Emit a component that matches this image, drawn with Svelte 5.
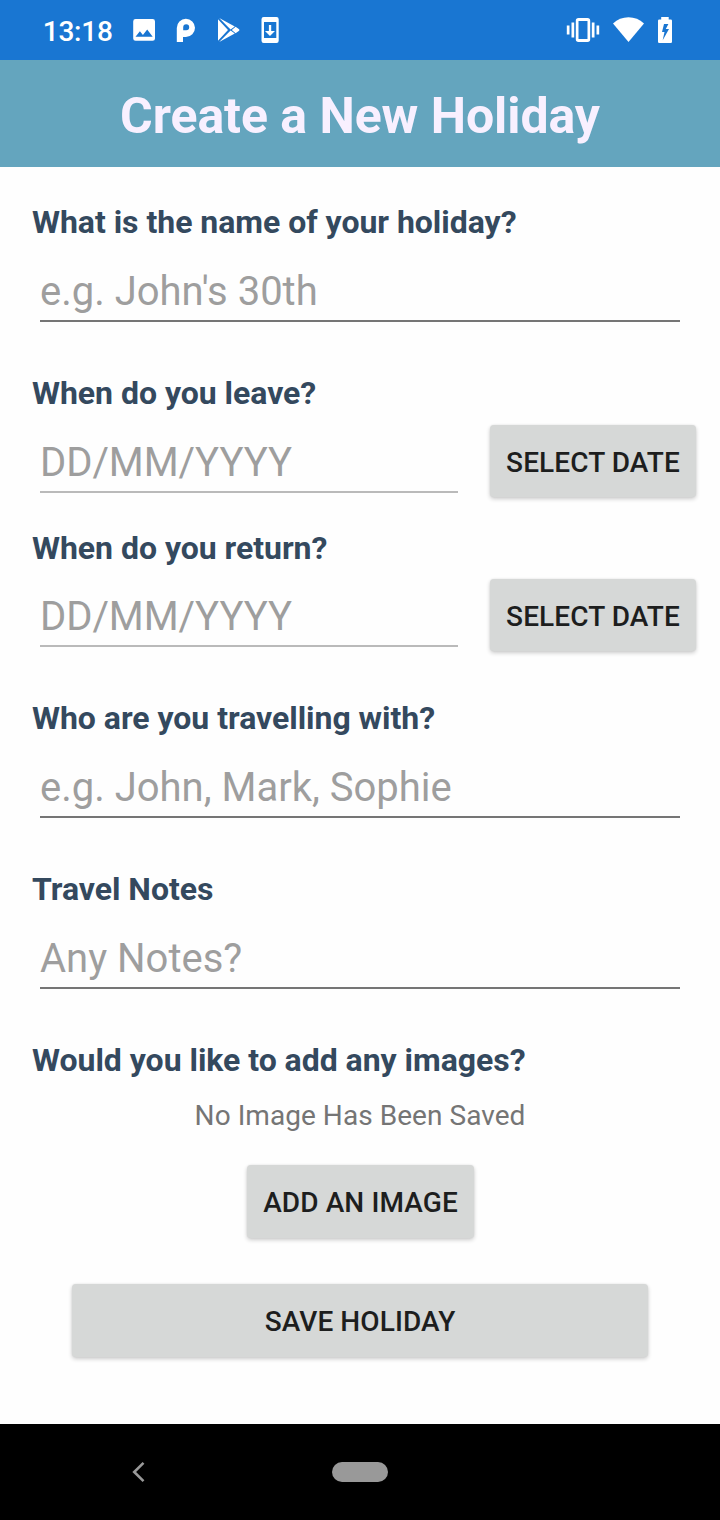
<script>
  const time = '13:18';
</script>

<div class="screen">
  <header class="status">
    <span class="time">{time}</span>
    <svg class="left-icons" width="156" height="60" viewBox="130 0 156 60" fill="#fff">
      <path fill-rule="evenodd" d="M135.600 19h17a2.400 2.400 0 0 1 2.400 2.400v17a2.400 2.400 0 0 1-2.400 2.400h-17a2.400 2.400 0 0 1-2.400-2.400v-17a2.400 2.400 0 0 1 2.400-2.400zM135.500 36.800h17.200l-5.500-7.400-4.300 5.500-3-3.700z" />
      <path fill-rule="evenodd" d="M176.800 42V28a9.100 9.100 0 1 1 9.100 9H183V42zM186.200 24.300a3 3 0 0 0-3 3v3h3a3 3 0 0 0 0-6z" />
      <path d="M218 19.200v21.600l10-10.800zM219.200 18l15.600 8.500-4.200 3.100zM219.200 42l15.600-8.500-4.200-3.100zM235.600 26.800l3.200 2.200q1.500 1 0 2L235.600 33.200l-3.800-3.200z" />
      <path fill-rule="evenodd" d="M263.700 17h12.800a2.200 2.200 0 0 1 2.200 2.200v21.600a2.200 2.200 0 0 1-2.200 2.200h-12.800a2.200 2.200 0 0 1-2.200-2.200V19.200a2.200 2.200 0 0 1 2.200-2.200zM264 22v16h12.300V22zM268.900 25h2.300v6h3.800l-5 5-5-5h3.900z" />
    </svg>
    <svg class="right-icons" width="120" height="60" viewBox="560 0 120 60" fill="#fff">
      <path fill-rule="evenodd" d="M578.500 18h9a2.700 2.700 0 0 1 2.700 2.700v18.600a2.700 2.700 0 0 1-2.700 2.700h-9a2.700 2.700 0 0 1-2.700-2.700V20.700a2.700 2.700 0 0 1 2.700-2.700zM578.500 21v18h9V21z" />
      <path d="M571.500 22.500h2.700v15h-2.700zM566.800 25.500h2.700v9h-2.700zM591.800 22.500h2.700v15h-2.700zM596.500 25.500h2.700v9h-2.700z" />
      <path d="M613 23.400Q619.600 17.300 628.500 17.300T644 23.400L628.500 42z" />
      <path fill-rule="evenodd" d="M661.200 17h7.500v2.500h2.100a1.200 1.200 0 0 1 1.200 1.200v21.100a1.200 1.200 0 0 1-1.200 1.200h-11.600a1.200 1.200 0 0 1-1.200-1.200V20.700a1.200 1.200 0 0 1 1.200-1.200h2zM664 24l-2 8h2.500l-1.800 8.200 6.300-11.200h-3.200l2.600-5z" />
    </svg>
  </header>

  <h1>Create a New Holiday</h1>

  <main>
    <section>
      <h2>What is the name of your holiday?</h2>
      <div class="field"><span>e.g. John's 30th</span></div>
    </section>
    <section class="leave">
      <h2>When do you leave?</h2>
      <div class="row">
        <div class="field">DD/MM/YYYY</div>
        <button>SELECT DATE</button>
      </div>
    </section>
    <section class="return">
      <h2>When do you return?</h2>
      <div class="row">
        <div class="field">DD/MM/YYYY</div>
        <button>SELECT DATE</button>
      </div>
    </section>
    <section>
      <h2>Who are you travelling with?</h2>
      <div class="field"><span>e.g. John, Mark, Sophie</span></div>
    </section>
    <section>
      <h2>Travel Notes</h2>
      <div class="field"><span>Any Notes?</span></div>
    </section>
    <section class="images">
      <h2>Would you like to add any images?</h2>
      <p>No Image Has Been Saved</p>
      <button class="add">ADD AN IMAGE</button>
    </section>
    <button class="save">SAVE HOLIDAY</button>
  </main>

  <nav>
    <svg width="16" height="22" viewBox="0 0 16 22" fill="none" stroke="#999" stroke-width="2.600"><path d="M12.500 1.900 3.200 11l9.300 9.100" /></svg>
    <div class="pill"></div>
  </nav>
</div>

<style>
  .screen {
    width: 720px;
    height: 1520px;
    display: flex;
    flex-direction: column;
    background: #fefefe;
    font-family: Roboto, sans-serif;
    overflow: hidden;
  }
  .status {
    height: 60px;
    flex: none;
    display: flex;
    align-items: center;
    background: #1976d2;
    color: #fff;
  }
  .time {
    width: 87.300px;
    padding: 3px 0 0 42.700px;
    font-size: 28px;
    font-weight: 500;
    line-height: 34px;
    letter-spacing: -0.2px;
  }
  .right-icons { margin: 0 40px 0 auto; }
  h1 {
    margin: 0;
    height: 107px;
    flex: none;
    box-sizing: border-box;
    padding-top: 26px;
    background: #64a5be;
    color: #f8f0ff;
    font-size: 50px;
    line-height: 60px;
    font-weight: 700;
    letter-spacing: -0.05px;
    text-align: center;
  }
  main {
    flex: 1;
    display: flex;
    flex-direction: column;
    padding: 36px 24px 0 32px;
  }
  section { margin-bottom: 52px; }
  .leave { margin-bottom: 32px; }
  .return { margin-bottom: 48px; }
  h2 {
    margin: 0;
    font-size: 32px;
    line-height: 38px;
    font-weight: 700;
    letter-spacing: -0.03px;
    color: #34495e;
  }
  .field {
    height: 81px;
    box-sizing: border-box;
    margin: 0 16px 0 8px;
    padding-top: 27px;
    border-bottom: 2px solid #757575;
    color: #9e9e9e;
    font-size: 40px;
    line-height: 48px;
    white-space: nowrap;
  }
  .row {
    display: flex;
    align-items: flex-start;
  }
  .row .field {
    flex: 1;
    margin-right: 32px;
    border-color: #bababa;
    letter-spacing: -0.05px;
  }
  button {
    display: block;
    height: 72px;
    margin: 0;
    padding: 3px 0 0;
    border: 0;
    border-radius: 4px;
    background: #d6d8d7;
    color: #1d1e1e;
    font: 500 28px/34px Roboto, sans-serif;
    letter-spacing: 0.1px;
    box-shadow: 0 2px 4px rgba(0, 0, 0, 0.2), 0 0 2px rgba(0, 0, 0, 0.08);
  }
  .row button {
    width: 206px;
    margin-top: 13px;
  }
  .return .field {
    height: 80px;
    padding-top: 26px;
  }
  .return .row button { margin-top: 12px; }
  .images { margin-bottom: 46px; }
  p {
    margin: 20px 8px 0 0;
    text-align: center;
    font-size: 28px;
    line-height: 34px;
    color: #757575;
    letter-spacing: 0.05px;
  }
  .add {
    width: 227px;
    height: 73px;
    margin: 32px auto 0 215px;
  }
  .save {
    width: 576px;
    height: 73px;
    margin-left: 40px;
  }
  nav {
    height: 96px;
    flex: none;
    display: flex;
    align-items: center;
    padding-left: 131px;
    gap: 185px;
    background: #000;
  }
  .pill {
    width: 56px;
    height: 20px;
    border-radius: 10px;
    background: #999;
  }
</style>
